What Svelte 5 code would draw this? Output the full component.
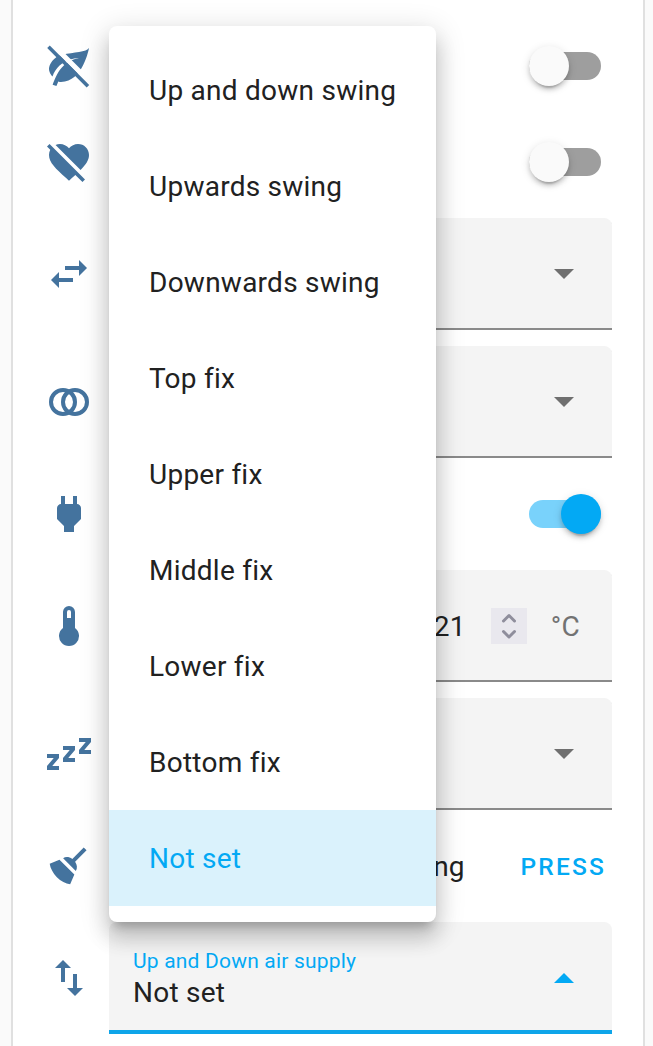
<script>
  const icons = {
    heartOff: 'M1,4.27L2.28,3L20,20.72L18.73,22L15.18,18.44L13.45,20.03L12,21.35L10.55,20.03C5.4,15.36 2,12.27 2,8.5C2,7.55 2.23,6.67 2.63,5.9L1,4.27M7.5,3C9.24,3 10.91,3.81 12,5.08C13.09,3.81 14.76,3 16.5,3C19.58,3 22,5.41 22,8.5C22,11.07 20.42,13.32 17.79,15.97L5.27,3.45C5.95,3.16 6.7,3 7.5,3Z',
    swapH: 'M21,9L17,5V8H10V10H17V13M7,11L3,15L7,19V16H14V14H7V11Z',
    swapV: 'M9,3L5,7H8V14H10V7H13M16,17V10H14V17H11L15,21L19,17H16Z',
    plug: 'M16,7V3H14V7H10V3H8V7H8C7,7 6,8 6,9V14.5L9.5,18V21H14.5V18L18,14.5V9C18,8 17,7 16,7Z',
    thermometer: 'M15 13V5A3 3 0 0 0 9 5V13A5 5 0 1 0 15 13M12 4A1 1 0 0 1 13 5V8H11V5A1 1 0 0 1 12 4Z',
    sleep: 'M23,12H17V10L20.39,6H17V4H23V6L19.62,10H23V12M15,16H9V14L12.39,10H9V8H15V10L11.62,14H15V16M7,20H1V18L4.39,14H1V12H7V14L3.62,18H7V20Z',
    broom: 'M19.36,2.72L20.78,4.14L15.06,9.85C16.13,11.39 16.28,13.24 15.38,14.44L9.06,8.12C10.26,7.22 12.11,7.37 13.65,8.44L19.36,2.72M5.93,17.57C3.92,15.56 2.69,13.16 2.35,10.92L7.23,8.83L14.67,16.27L12.58,21.15C10.34,20.81 7.94,19.58 5.93,17.57Z'
  };
  const rows = [
    { icon: 'leafOff', type: 'switch', on: false },
    { icon: 'heartOff', type: 'switch', on: false },
    { icon: 'swapH', type: 'select' },
    { icon: 'rings', type: 'select' },
    { icon: 'plug', type: 'switch', on: true },
    { icon: 'thermometer', type: 'number' },
    { icon: 'sleep', type: 'select' },
    { icon: 'broom', type: 'button' },
    { icon: 'swapV', type: 'open' }
  ];
  const options = ['Up and down swing', 'Upwards swing', 'Downwards swing', 'Top fix', 'Upper fix', 'Middle fix', 'Lower fix', 'Bottom fix', 'Not set'];
  let selected = $state('Not set');
</script>

<main class="card">
  {#each rows as row}
    <div class="row {row.type}">
      <svg class="icon" viewBox="0 0 24 24">
        {#if row.icon === 'leafOff'}
          <mask id="slash-gap" maskUnits="userSpaceOnUse" x="0" y="0" width="24" height="24">
            <rect width="24" height="24" fill="#fff" />
            <path d="M2,-0.4L24,21.6" stroke="#000" stroke-width="2.6" />
          </mask>
          <path mask="url(#slash-gap)" d="M17,8C8,10 5.9,16.17 3.82,21.34L5.71,22L6.66,19.7C7.14,19.87 7.64,20 8,20C19,20 22,3 22,3C21,5 14,5.25 9,6.25C4,7.25 2,11.5 2,13.5C2,15.5 3.75,17.25 3.75,17.25C7,8 17,8 17,8Z" />
          <path d="M1.11,3L2.39,1.73L22.11,21.46L20.84,22.73Z" />
        {:else if row.icon === 'rings'}
          <g class="rings"><circle cx="9" cy="12" r="6" /><circle cx="15" cy="12" r="6" /></g>
        {:else}
          <path d={icons[row.icon]} />
        {/if}
      </svg>
      {#if row.type === 'switch'}
        <div class="content end"><span class="track" class:on={row.on}><span class="knob"></span></span></div>
      {:else if row.type === 'select'}
        <div class="content field"><svg class="caret" viewBox="0 0 20 10"><path d="M0 0H20L10 10Z" /></svg></div>
      {:else if row.type === 'number'}
        <div class="content field number-field">
          <span class="value">21</span>
          <svg class="spinner" viewBox="0 0 36 36"><path d="M12.5 13L18 7.5L23.5 13M12.5 23.5L18 29L23.5 23.5" /></svg>
          <span class="unit">°C</span>
        </div>
      {:else if row.type === 'button'}
        <div class="content action"><span class="name">ng</span><button>PRESS</button></div>
      {:else}
        <div class="content field active">
          <div class="labels"><span class="label">Up and Down air supply</span><span class="current">{selected}</span></div>
          <svg class="caret" viewBox="0 0 20 10"><path d="M0 10H20L10 0Z" /></svg>
          <ul class="menu">
            {#each options as option}
              <li class:selected={option === selected}><span>{option}</span></li>
            {/each}
          </ul>
        </div>
      {/if}
    </div>
  {/each}
</main>

<style>
  :global(body) { background: #fafafa; overflow: hidden; }
  .card {
    box-sizing: border-box; width: 634px; height: 1046px; margin-left: 11px;
    padding: 26px 31px 0 32px; border: solid #e0e0e0; border-width: 0 2px;
    background: #fff; display: flex; flex-direction: column; gap: 16px;
    font: 28px/36px Roboto, sans-serif; color: #212121;
  }
  .row { display: flex; align-items: center; gap: 16px; height: 112px; flex: none; }
  .row.switch, .row.button { height: 80px; }
  .icon { width: 48px; height: 48px; fill: #44739e; flex: none; }
  .rings { fill: none; stroke: #44739e; stroke-width: 2; }
  .content { flex: 1; display: flex; align-items: center; box-sizing: border-box; min-width: 0; }
  .end { justify-content: flex-end; padding-right: 11px; }
  .track { width: 72px; height: 28px; border-radius: 14px; background: #9e9e9e; display: flex; align-items: center; }
  .knob {
    width: 40px; height: 40px; border-radius: 50%; background: #fafafa; flex: none;
    box-shadow: 0 6px 2px -4px rgba(0,0,0,.2), 0 4px 4px rgba(0,0,0,.14), 0 2px 10px rgba(0,0,0,.12);
  }
  .track.on { background: #79d2fb; justify-content: flex-end; }
  .on .knob { background: #03a9f4; }
  .field {
    position: relative; height: 112px; padding: 0 38px 0 24px; justify-content: flex-end;
    border-radius: 8px 8px 0 0; background: #f4f4f4; box-shadow: inset 0 -2px #8a8a8a;
  }
  .caret { width: 20px; height: 10px; fill: #6f6f6f; }
  .number-field { padding-right: 32px; letter-spacing: .25px; }
  .value, .unit { padding-top: 2px; }
  .spinner { width: 36px; height: 36px; margin: 0 24px 0 25px; background: #e9e8ee; }
  .spinner path { fill: none; stroke: #8f8e9c; stroke-width: 3; stroke-linecap: round; stroke-linejoin: round; }
  .unit { color: #727272; }
  .action { justify-content: flex-end; padding: 2px 6px 0 0; }
  .name { margin-right: 56px; }
  button {
    padding: 0; border: 0; background: none; color: #03a9f4;
    font: 500 24.5px/36px Roboto, sans-serif; letter-spacing: 2.2px;
  }
  .active { box-shadow: inset 0 -4px #0ea5e9; justify-content: space-between; }
  .active .caret { fill: #03a9f4; }
  .labels { display: flex; flex-direction: column; letter-spacing: .25px; padding-top: 2px; }
  .label { color: #03a9f4; font-size: 21px; line-height: 28px; letter-spacing: .19px; }
  .menu {
    position: absolute; left: 0; bottom: 100%; width: 327px; box-sizing: border-box;
    margin: 0; padding: 16px 0; list-style: none; overflow: hidden;
    border-radius: 8px; background: #fff; letter-spacing: .25px;
    box-shadow: 0 10px 10px -6px rgba(0,0,0,.2), 0 16px 20px 2px rgba(0,0,0,.14), 0 6px 28px 4px rgba(0,0,0,.12);
  }
  li { box-sizing: border-box; display: flex; align-items: center; height: 96px; padding: 2px 40px 0; white-space: nowrap; }
  li.selected { background: #daf2fc; color: #03a9f4; }
</style>
